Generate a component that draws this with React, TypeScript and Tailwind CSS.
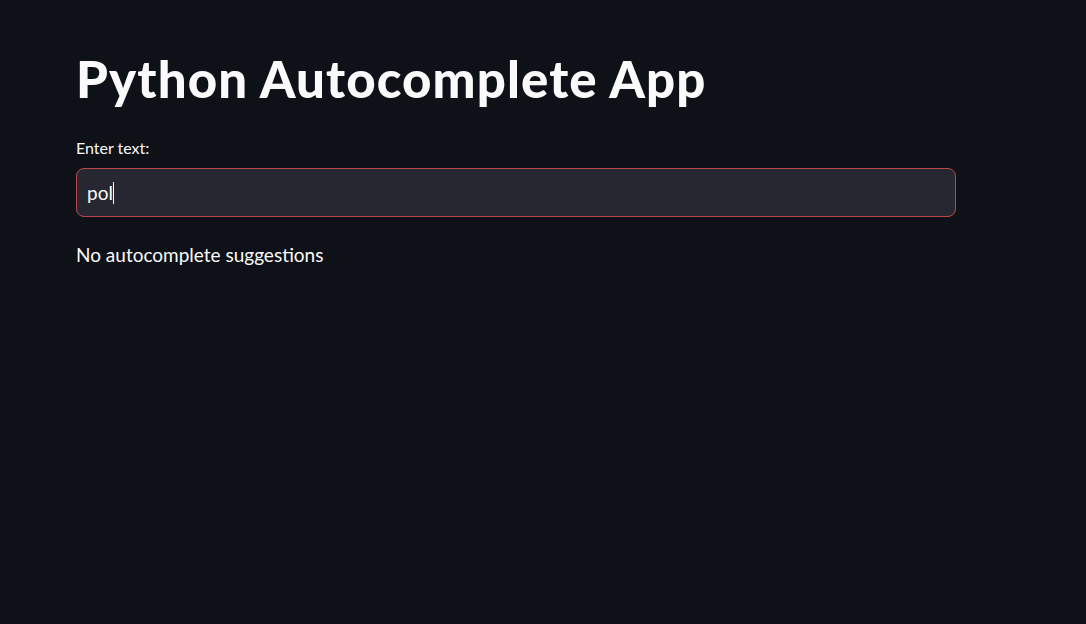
export default function App() {
  return (
    <div
      className="min-h-screen w-full bg-[#0e1117] text-[#fafafa]"
      style={{ fontFamily: "Lato, 'Noto Sans', sans-serif" }}
    >
      <div className="w-[880px] ml-[76px] pt-[48px]">
        <h1 className="text-[51px] font-black leading-[62px] tracking-[1.1px]">Python Autocomplete App</h1>

        <label className="block mt-[26px] text-[16px] leading-[24px]">Enter text:</label>
        <div className="mt-[8px] h-[49px] rounded-[8px] border border-[#bb474d] bg-[#262730] flex items-center px-[10px]">
          <span className="text-[19px] leading-none">pol</span>
          <span className="w-px h-[22px] bg-[#fafafa]" />
        </div>

        <p className="mt-[24px] text-[19px] leading-[28px]">No autocomplete suggestions</p>
      </div>
    </div>
  );
}
